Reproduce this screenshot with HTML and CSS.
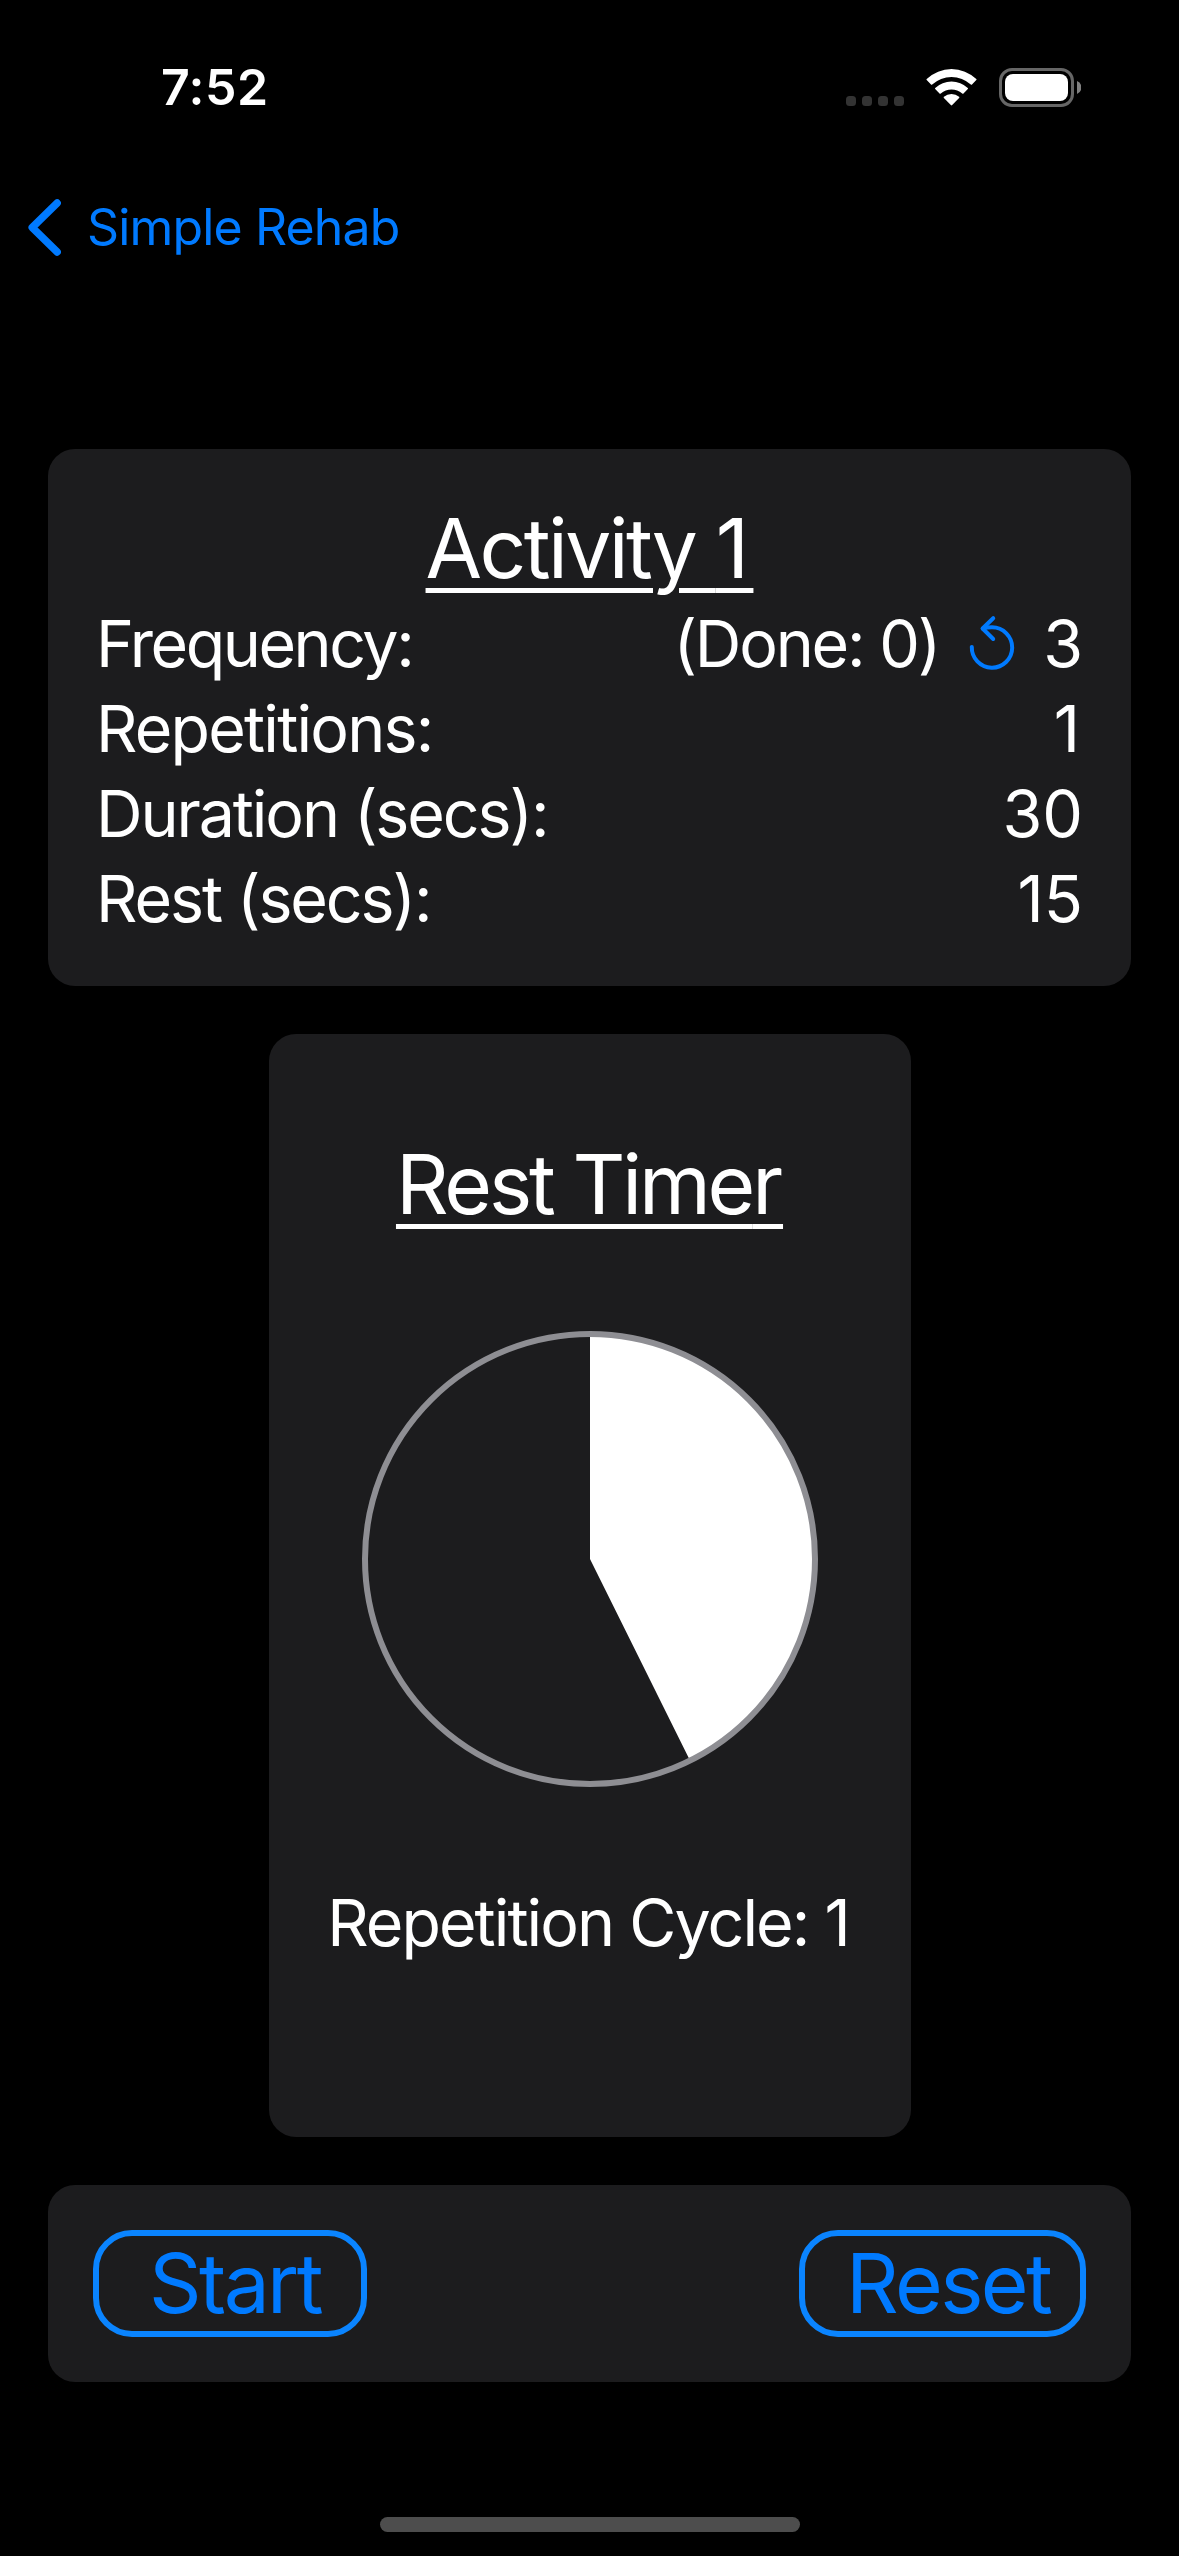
FILE: index.html
```html
<!DOCTYPE html>
<html lang="en">
<head>
<meta charset="utf-8">
<title>Activity 1</title>
<link rel="stylesheet" href="styles.css">
</head>
<body>
<div class="screen">
  <header class="status">
    <time class="clock">7:52</time>
    <div class="indicators">
      <div class="cell"><i></i><i></i><i></i><i></i></div>
      <svg class="wifi" width="51" height="37" viewBox="0 0 51 37" fill="#fff">
        <path d="M.7 10.1A36 36 0 0 1 50.3 10.1Q50.8 10.6 50.3 11.2L46 15.6Q45.4 16.1 44.8 15.6A28.6 28.6 0 0 0 6.2 15.6Q5.6 16.1 5 15.6L.7 11.2Q.2 10.6 .7 10.1Z" transform="translate(0 -.1)"/>
        <path d="M9.2 19A24 24 0 0 1 41.8 19Q42.3 19.5 41.8 20.1L37.5 24.4Q36.9 24.9 36.2 24.4A16.4 16.4 0 0 0 14.8 24.4Q14.1 24.9 13.5 24.4L9.2 20.1Q8.7 19.5 9.2 19Z"/>
        <path d="M17.9 27.8A11.8 11.8 0 0 1 33.1 27.8Q33.6 28.3 33.1 28.9L26.2 36.1Q25.5 36.8 24.8 36.1L17.9 28.9Q17.4 28.3 17.9 27.8Z"/>
      </svg>
      <div class="battery"><div class="charge"></div></div>
      <svg class="nub" width="4" height="13" viewBox="0 0 4 13"><path d="M0 0A7 7 0 0 1 0 13Z" fill="#808080"/></svg>
    </div>
  </header>

  <nav class="nav">
    <svg width="33" height="57" viewBox="0 0 33 57" fill="none" stroke="#007aff" stroke-width="7.4" stroke-linecap="round" stroke-linejoin="round"><path d="M29.2 4L4.2 28.5L29.2 53"/></svg>
    <a class="back">Simple Rehab</a>
  </nav>

  <main class="content">
    <section class="card summary">
      <h1 class="title">Activity <span class="last">1</span></h1>
      <div class="row">
        <span class="label tight">Frequency:</span>
        <span class="done">(Done: 0)</span>
        <svg class="undo" width="46" height="56" viewBox="0 0 46 56" fill="none" stroke="#007aff" stroke-width="4" stroke-linecap="round" stroke-linejoin="round">
          <path d="M2.8 31.9A20.2 20.2 0 1 0 23 12.3Q18.2 12.3 13.8 13.5"/>
          <path d="M24.2 3.2L13.6 13.5L24.2 24"/>
        </svg>
        <span>3</span>
      </div>
      <div class="row"><span class="label loose">Repetitions:</span><span class="one">1</span></div>
      <div class="row"><span class="label">Duration (secs):</span><span>30</span></div>
      <div class="row"><span class="label">Rest (secs):</span><span>15</span></div>
    </section>

    <section class="card timer">
      <h2 class="title timer-title">Rest Time<span class="end">r</span></h2>
      <svg class="pie" width="456" height="456" viewBox="0 0 456 456">
        <path d="M228 228V3A225 225 0 0 1 328 429.6Z" fill="#fff"/>
        <circle cx="228" cy="228" r="225" fill="none" stroke="#8e8e93" stroke-width="6"/>
      </svg>
      <p class="cycle">Repetition Cycle: 1</p>
    </section>

    <section class="card actions">
      <button class="btn start">Start</button>
      <button class="btn reset">Reset</button>
    </section>
  </main>

  <div class="home"></div>
</div>
</body>
</html>
```
FILE: styles.css
```css
* { box-sizing: border-box; }
body { margin: 0; background: #000; }
h1, h2, p { margin: 0; font-weight: 400; }
svg { display: block; flex: none; }

.screen {
  width: 1179px;
  height: 2556px;
  padding-top: 58px;
  display: flex;
  flex-direction: column;
  background: #000;
  color: #fff;
  font-family: Inter, "Liberation Sans", sans-serif;
  white-space: nowrap;
  overflow: hidden;
}

.status {
  height: 60px;
  padding: 0 98px 0 161px;
  display: flex;
  justify-content: space-between;
}
.clock { font-size: 50px; font-weight: 600; line-height: 58px; letter-spacing: 0.5px; }
.indicators { display: flex; align-items: flex-start; padding-top: 10px; }
.cell { display: flex; gap: 6px; margin: 28px 22px 0 0; }
.cell i { width: 10px; height: 10px; border-radius: 3.5px; background: #333; }
.wifi { margin: 1px 22px 0 0; }
.battery {
  width: 75px;
  height: 39px;
  padding: 3px;
  border: 3px solid #666;
  border-radius: 13px;
}
.charge { height: 27px; border-radius: 8px; background: #fff; }
.nub { margin: 13px 0 0 3px; }

.nav {
  height: 60px;
  margin: 79px 0 192px;
  padding-left: 28px;
  display: flex;
  align-items: center;
  gap: 26px;
}
.back { font-size: 50px; line-height: 60px; letter-spacing: -0.85px; color: #007aff; }

.content { display: flex; flex-direction: column; align-items: center; gap: 48px; }
.card { width: 1083px; border-radius: 27px; background: #1c1c1e; }

.title {
  align-self: center;
  font-size: 82px;
  line-height: 103px;
  letter-spacing: -2.6px;
  text-decoration: underline;
  text-decoration-thickness: 5px;
  text-underline-offset: 10px;
}
.last { letter-spacing: 4.3px; }

.summary { height: 537px; padding: 48px; display: flex; flex-direction: column; }
.summary .title { margin-bottom: 1px; }
.row { height: 85px; display: flex; align-items: flex-start; font-size: 64.5px; line-height: 87px; }
.label { margin-right: auto; letter-spacing: -2.1px; }
.label.tight { letter-spacing: -2.45px; }
.label.loose { letter-spacing: -1.8px; }
.done { margin-right: 30px; letter-spacing: -2.2px; }
.undo { margin: 14px 28px 0 0; }
.one { margin-right: 3px; }

.timer {
  width: 642px;
  height: 1103px;
  padding-top: 99px;
  display: flex;
  flex-direction: column;
  align-items: center;
}
.timer-title { letter-spacing: -3.2px; }
.end { letter-spacing: 0; }
.pie { margin: 95px 0 93px; }
.cycle { padding-right: 3px; font-size: 64.5px; line-height: 87px; letter-spacing: -1.95px; }

.actions { height: 197px; padding: 45px; display: flex; justify-content: space-between; }
.btn {
  height: 107px;
  padding: 0;
  border: 6px solid #0a84ff;
  border-radius: 39px;
  background: none;
  color: #007aff;
  font-family: inherit;
  font-size: 82px;
  line-height: 95px;
  letter-spacing: -2.6px;
  text-align: left;
}
.start { width: 274px; padding-left: 50px; }
.reset { width: 287px; padding-left: 41px; }

.home {
  width: 420px;
  height: 15px;
  margin: 135px auto 0;
  border-radius: 8px;
  background: #4d4d4d;
}
```
